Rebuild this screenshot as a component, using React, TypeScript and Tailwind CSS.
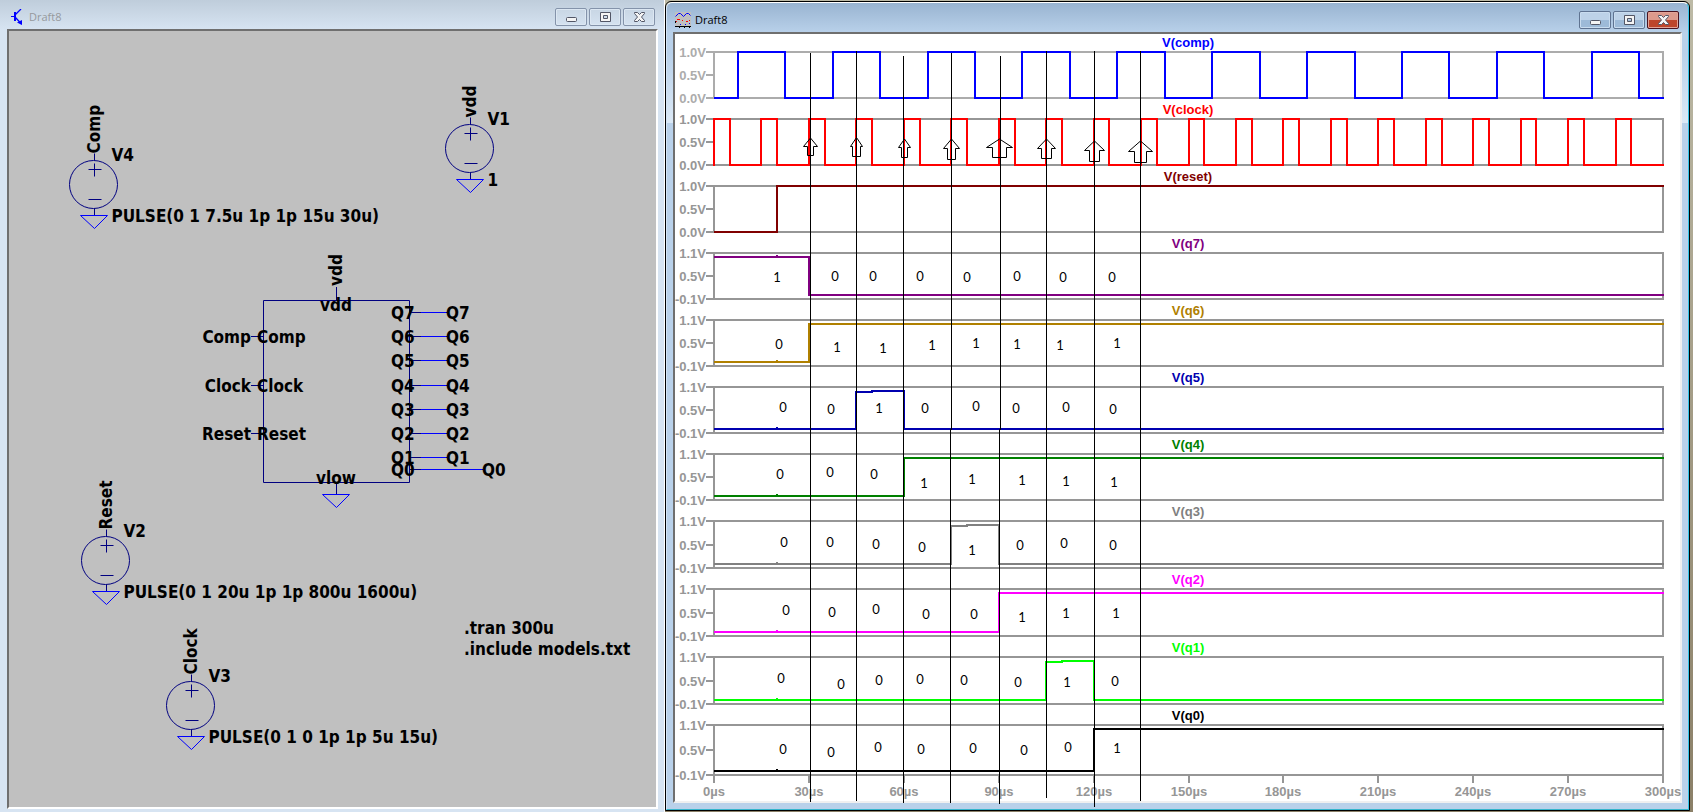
import React from "react";
import clsx from "clsx";

type Point = [number, number];

const NAVY = "#000080";
const WIRE = "#0000ff";
const GRID = "#969696";

// Plot area, in drawing units
const X0 = 714;
const X1 = 1663;
const END = 300;

const timeToX = (t: number) => Math.round(X0 + (t / END) * (X1 - X0));

interface Trace {
  name: string;
  color: string;
  axis: [number, number, number];
  labels: [string, string, string];
  high: number;
  low: number;
  start: 0 | 1;
  edges: number[];
  bits?: string;
  marks?: Point[];
}

const every = (first: number, width: number, period: number) => {
  const out: number[] = [];
  for (let t = first; t < END; t += period) {
    if (t > 0) out.push(t);
    if (t + width < END) out.push(t + width);
  }
  return out;
};

const ANALOG: [string, string, string] = ["1.0V", "0.5V", "0.0V"];
const LOGIC: [string, string, string] = ["1.1V", "0.5V", "-0.1V"];

const traces: Trace[] = [
  { name: "V(comp)", color: "#0000ff", axis: [52, 75, 98], labels: ANALOG, high: 52, low: 98, start: 0, edges: every(7.5, 15, 30) },
  { name: "V(clock)", color: "#ff0000", axis: [119, 142, 165], labels: ANALOG, high: 119, low: 165, start: 1, edges: every(0, 5, 15) },
  { name: "V(reset)", color: "#800000", axis: [186, 209, 232], labels: ANALOG, high: 186, low: 232, start: 0, edges: [20] },
  {
    name: "V(q7)", color: "#800080", axis: [253, 276, 299], labels: LOGIC, high: 257, low: 295, start: 1, edges: [30], bits: "10000000",
    marks: [[777, 277], [835, 276], [873, 276], [920, 276], [967, 277], [1017, 276], [1063, 277], [1112, 277]],
  },
  {
    name: "V(q6)", color: "#b08000", axis: [320, 343, 366], labels: LOGIC, high: 324, low: 362, start: 0, edges: [30], bits: "01111111",
    marks: [[779, 344], [837, 347], [883, 348], [932, 345], [976, 343], [1017, 344], [1060, 345], [1117, 343]],
  },
  {
    name: "V(q5)", color: "#0000b0", axis: [387, 410, 433], labels: LOGIC, high: 391, low: 429, start: 0, edges: [45, 60], bits: "00100000",
    marks: [[783, 407], [831, 409], [879, 408], [925, 408], [976, 406], [1016, 408], [1066, 407], [1113, 409]],
  },
  {
    name: "V(q4)", color: "#008000", axis: [454, 477, 500], labels: LOGIC, high: 458, low: 496, start: 0, edges: [60], bits: "00011111",
    marks: [[780, 474], [830, 472], [874, 474], [924, 483], [972, 479], [1022, 480], [1066, 481], [1114, 482]],
  },
  {
    name: "V(q3)", color: "#808080", axis: [521, 545, 568], labels: LOGIC, high: 525, low: 564, start: 0, edges: [75, 90], bits: "00001000",
    marks: [[784, 542], [830, 542], [876, 544], [922, 547], [972, 550], [1020, 545], [1064, 543], [1113, 545]],
  },
  {
    name: "V(q2)", color: "#ff00ff", axis: [589, 613, 636], labels: LOGIC, high: 593, low: 632, start: 0, edges: [90], bits: "00000111",
    marks: [[786, 610], [832, 612], [876, 609], [926, 614], [974, 614], [1022, 617], [1066, 613], [1116, 613]],
  },
  {
    name: "V(q1)", color: "#00ff00", axis: [657, 681, 704], labels: LOGIC, high: 661, low: 700, start: 0, edges: [105, 120], bits: "00000010",
    marks: [[781, 678], [841, 684], [879, 680], [920, 679], [964, 680], [1018, 682], [1067, 682], [1115, 681]],
  },
  {
    name: "V(q0)", color: "#000000", axis: [725, 750, 775], labels: LOGIC, high: 729, low: 771, start: 0, edges: [120], bits: "00000001",
    marks: [[783, 749], [831, 752], [878, 747], [921, 749], [973, 748], [1024, 750], [1068, 747], [1117, 748]],
  },
];

const tracePath = ({ edges, start, high, low }: Trace) => {
  let up = start === 1;
  let d = `M${X0} ${up ? high : low}`;
  // short output pulses settle one unit below the rail first
  const soft = edges.length === 2;
  edges.forEach((t) => {
    const x = timeToX(t);
    up = !up;
    d += ` H${x} V${up ? high + (soft ? 1 : 0) : low}`;
    if (soft && up) d += ` H${x + 16} V${high}`;
  });
  return `${d} H${X1 + 1}`;
};

const cursors = [
  "M810.5 53V802",
  "M856.5 51V801",
  "M903.5 56V803",
  "M951.5 53V429.5H950.5V803",
  "M1000.5 56V429.5H999.5V804",
  "M1046.5 51V798",
  "M1094.5 51V807",
  "M1140.5 51V801",
];

// centre, tip, shoulder, bottom, half wing span, half shaft width
const arrows = [
  [810.5, 138, 146.5, 155.5, 7, 3],
  [856.5, 137.5, 146.5, 156.5, 6, 4],
  [904.5, 139, 147.5, 157.5, 6, 3],
  [951.5, 139, 148.5, 159.5, 8, 4],
  [999.5, 139, 147.5, 157.5, 13, 7],
  [1046.5, 139, 148.5, 158.5, 9, 5],
  [1094.5, 141, 150.5, 161.5, 10, 5],
  [1140.5, 141, 151.5, 162.5, 12, 6],
];

const TracePanel: React.FC<{ trace: Trace }> = ({ trace }) => {
  const [top, mid, bottom] = trace.axis;
  const grid = trace.name === "V(comp)" ? "#acacac" : GRID;
  const noisy = trace.bits !== undefined;
  return (
    <g>
      <g stroke={grid} strokeWidth={2} fill="none">
        <path d={`M${X0} ${top - 1}V${bottom}`} />
        <path d={`M706 ${top}H${X1}V${bottom}H706M706 ${mid}H${X0}`} />
      </g>
      {trace.axis.map((y, i) => (
        <text key={y} x={706} y={y + 5} textAnchor="end" fill={grid}>
          {trace.labels[i]}
        </text>
      ))}
      <text x={1188} y={top - 5} textAnchor="middle" fill={trace.color}>
        {trace.name}
      </text>
      <path d={tracePath(trace)} stroke={trace.color} strokeWidth={2} fill="none" />
      {trace.name === "V(clock)" && <path d={`M${X0} ${top - 1}V${bottom + 1}`} stroke={trace.color} strokeWidth={2} />}
      {noisy && <rect x={776} y={(trace.start ? trace.high : trace.low) - 2} width={2} height={2} fill={trace.color} />}
    </g>
  );
};

const Waveforms: React.FC = () => (
  <svg
    viewBox="675 34 1005 767"
    className="relative z-10 block w-full overflow-visible font-['Liberation_Sans',Arial,sans-serif] text-[13px] font-bold"
    role="img"
    aria-label="Simulation waveforms"
  >
    {Array.from({ length: 11 }, (_, i) => i * 30).map((t) => (
      <g key={t}>
        <path d={`M${timeToX(t)} 775V783`} stroke={GRID} strokeWidth={2} />
        <text x={timeToX(t)} y={796} textAnchor="middle" fill={GRID}>
          {t}µs
        </text>
      </g>
    ))}
    {traces.map((trace) => (
      <TracePanel key={trace.name} trace={trace} />
    ))}
    <path d={cursors.join("")} stroke="#000" fill="none" />
    {arrows.map(([x, tip, shoulder, bottom, wing, shaft]) => (
      <path
        key={x}
        d={`M${x} ${tip}L${x + wing} ${shoulder}H${x + shaft}V${bottom}H${x - shaft}V${shoulder}H${x - wing}Z`}
        stroke="#000"
        fill="none"
      />
    ))}
    <g className="font-['Lato','Open_Sans',sans-serif] text-[13px] font-normal" textAnchor="middle">
      {traces.map((trace) =>
        trace.marks?.map(([x, y], i) => (
          <text key={`${trace.name}-${i}`} x={x} y={y + 5}>
            {trace.bits?.[i]}
          </text>
        ))
      )}
    </g>
  </svg>
);

const Ground: React.FC<{ x: number; y: number }> = ({ x, y }) => (
  <path d={`M${x - 14} ${y}H${x + 13}L${x} ${y + 13}Z`} stroke={WIRE} fill="none" />
);

interface SourceProps {
  x: number;
  y: number;
  r?: number;
  net: string;
  name: string;
  value: string;
}

const VoltageSource: React.FC<SourceProps> = ({ x, y, r = 24, net, name, value }) => (
  <g>
    <g stroke={NAVY} fill="none">
      <circle cx={x - 1} cy={y} r={r} />
      <path d={`M${x} ${y - r - 7}V${y - r}M${x} ${y + r}V${y + r + 7}`} />
      <path d={`M${x - 6} ${y - 15}H${x + 7}M${x} ${y - 21}V${y - 8}M${x - 6} ${y + 15}H${x + 7}`} />
    </g>
    <Ground x={x} y={y + r + 7} />
    <text transform={`translate(${x + 5} ${y - r - 7}) rotate(-90)`}>{net}</text>
    <text x={x + 17} y={y - 24}>{name}</text>
    <text x={x + 17} y={y + 37}>{value}</text>
  </g>
);

const inputs: [string, number][] = [["Comp", 336.5], ["Clock", 385.5], ["Reset", 433.5]];

const outputs: [string, number, number][] = [
  ["Q7", 312.5, 446],
  ["Q6", 336.5, 446],
  ["Q5", 360.5, 446],
  ["Q4", 385.5, 446],
  ["Q3", 409.5, 446],
  ["Q2", 433.5, 446],
  ["Q1", 457.5, 446],
  ["Q0", 469.5, 482],
];

const Schematic: React.FC = () => (
  <svg
    viewBox="9 31 647 776"
    className="block w-full font-['DejaVu_Sans_Condensed','Noto_Sans',sans-serif] text-[17px] font-bold"
    role="img"
    aria-label="Circuit schematic"
  >
    <VoltageSource x={94.5} y={184.5} net="Comp" name="V4" value="PULSE(0 1 7.5u 1p 1p 15u 30u)" />
    <VoltageSource x={470.5} y={148.5} net="vdd" name="V1" value="1" />
    <VoltageSource x={106.5} y={560.5} net="Reset" name="V2" value="PULSE(0 1 20u 1p 1p 800u 1600u)" />
    <VoltageSource x={191.5} y={705.5} net="Clock" name="V3" value="PULSE(0 1 0 1p 1p 5u 15u)" />

    <path d="M263.5 300.5H409.5V482.5H263.5ZM336.5 287V300M336.5 483V494" stroke={NAVY} fill="none" />
    <Ground x={336.5} y={494.5} />
    <text transform="translate(342 286) rotate(-90)">vdd</text>
    <text x={336} y={311} textAnchor="middle">vdd</text>
    <text x={336} y={484} textAnchor="middle">vlow</text>

    {inputs.map(([pin, y]) => (
      <g key={pin}>
        <path d={`M251 ${y}H264`} stroke={NAVY} />
        <text x={251} y={y + 6} textAnchor="end">{pin}</text>
        <text x={257} y={y + 6}>{pin}</text>
      </g>
    ))}
    {outputs.map(([pin, y, x]) => (
      <g key={pin}>
        <path d={`M410 ${y}H421`} stroke={NAVY} />
        <path d={`M421 ${y}H${x + 1}`} stroke={WIRE} />
        <text x={391} y={y + 6}>{pin}</text>
        <text x={x} y={y + 6}>{pin}</text>
      </g>
    ))}

    <text x={464} y={634}>.tran 300u</text>
    <text x={464} y={655}>.include models.txt</text>
  </svg>
);

const glyphs = {
  Minimize: <rect x="1.5" y="6.5" width="10" height="4" rx="1" />,
  Maximize: <path d="M1.5 1.5H11.5V10.5H1.5ZM4.5 4.5V7.5H8.5V4.5Z" fillRule="evenodd" />,
  Close: <path d="M1.5 1.5H4.5L6.5 3.5L8.5 1.5H11.5V2.5L8.5 6L11.5 9.5V10.5H8.5L6.5 8.5L4.5 10.5H1.5V9.5L4.5 6L1.5 2.5Z" />,
};

const WindowButtons: React.FC<{ active?: boolean }> = ({ active }) => (
  <div className="flex gap-0.5">
    {(Object.keys(glyphs) as (keyof typeof glyphs)[]).map((kind) => (
      <button
        key={kind}
        type="button"
        aria-label={kind}
        className={clsx(
          "flex h-[18px] w-8 items-center justify-center rounded-xs border",
          !active && "border-[#8493aa] bg-linear-to-b from-[#c8d6e4] to-[#d5e2f0] shadow-[inset_0_0_0_1px_#dce7f2]",
          active && kind !== "Close" &&
            "border-[#5f7391] bg-linear-to-b from-[#bdd2e8] from-50% to-[#9dbad8] to-50% shadow-[inset_0_0_0_1px_#c9dcef]",
          active && kind === "Close" &&
            "border-[#4b1420] bg-linear-to-b from-[#dd9a8c] from-50% to-[#bd452b] to-50% shadow-[inset_0_0_0_1px_#e2a498]"
        )}
      >
        <svg viewBox="0 0 13 12" className="h-3 w-[13px]" fill="#f4f4f4" stroke="#525666">
          {glyphs[kind]}
        </svg>
      </button>
    ))}
  </div>
);

const TransistorIcon = () => (
  <svg viewBox="0 0 16 16" className="size-4" stroke="#0000ff" fill="none" aria-hidden="true">
    <path d="M0 7.5H4" />
    <path d="M4 3V12" strokeWidth="2" />
    <path d="M4.5 5.5L10 0M4.5 8.5L10.5 15" strokeWidth="1.3" />
    <path d="M11 16V11L6 13.5Z" fill="#0000ff" stroke="none" />
  </svg>
);

const WaveIcon = () => (
  <svg viewBox="0 0 16 16" className="size-4" fill="none" aria-hidden="true">
    <rect width="16" height="15" fill="#c0c0c0" />
    <path d="M.5 4.5L3.5 1.5H5.5L8.5 4.5L11.5 1.5H13.5L15.5 3.5" stroke="#0000ff" />
    <path d="M1 9.5H2M2 7.5H5M7 8.5H8M11 9.5H13M14 8.5H15" stroke="#ff0000" />
    <path d="M5 12.5H6M10 12.5H11M14 11.5H15" stroke="#0000ff" />
    <path d="M0 14.5H16M4.5 14V16M9.5 14V16M14.5 14V16M.5 9V11" stroke="#000" />
  </svg>
);

export default function App() {
  return (
    <main className="grid min-h-screen grid-cols-[665fr_1028fr] items-start bg-linear-to-b from-[#bdbaa6] to-[#8b8068]">
      <section
        aria-label="Schematic"
        className="flex flex-col self-stretch border-r border-white bg-[linear-gradient(#bfcddb,#d7e4f2_30px)] pr-1.5 pb-[3px] pl-[7px] font-['Open_Sans',sans-serif]"
      >
        <header className="flex h-[29px] items-center justify-between pt-[5px] pr-[3px] pl-1">
          <div className="flex items-center gap-0.5 text-[11px] text-[#96999d]">
            <TransistorIcon />
            <h1>Draft8</h1>
          </div>
          <WindowButtons />
        </header>
        <div className="grow border-2 border-t-[#6f6f6f] border-r-white border-b-white border-l-[#6f6f6f] bg-[#c0c0c0]">
          <Schematic />
        </div>
      </section>

      <section
        aria-label="Waveform viewer"
        className="mt-px mr-[3px] rounded-t-md border border-black font-['Open_Sans',sans-serif]"
      >
        <div className="rounded-t-md border border-t-white border-r-[#35c5e8] border-b-[#35b5cc] border-l-[#d5e5f5] bg-[linear-gradient(#99b4d1,#b9d1ea_30px,#b9d1ea_50px,#dce9f6_120px,#b9d1ea_120px)] px-1.5 pb-1.5">
          <header className="flex h-[29px] items-center justify-between pt-[5px] pr-[3px] pl-0.5">
            <div className="flex items-center gap-1 text-[11px] text-black">
              <WaveIcon />
              <h1>Draft8</h1>
            </div>
            <WindowButtons active />
          </header>
          <div className="border-2 border-t-[#6f6f6f] border-r-[#f0f0f0] border-b-[#f0f0f0] border-l-[#6f6f6f] bg-white">
            <Waveforms />
          </div>
        </div>
      </section>
    </main>
  );
}
